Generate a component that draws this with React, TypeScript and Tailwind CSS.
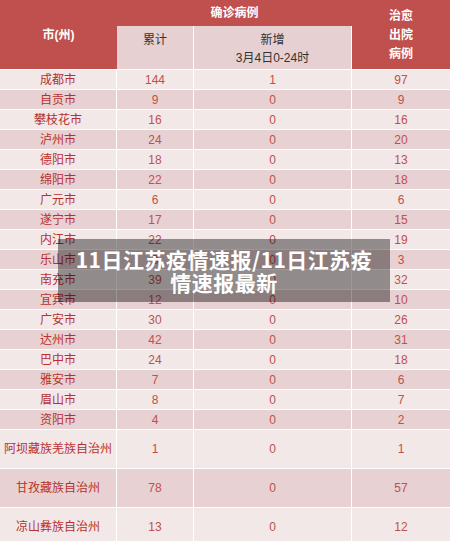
const rows: [string, string, string, string][] = [
  ["成都市", "144", "1", "97"],
  ["自贡市", "9", "0", "9"],
  ["攀枝花市", "16", "0", "16"],
  ["泸州市", "24", "0", "20"],
  ["德阳市", "18", "0", "13"],
  ["绵阳市", "22", "0", "18"],
  ["广元市", "6", "0", "6"],
  ["遂宁市", "17", "0", "15"],
  ["内江市", "22", "0", "19"],
  ["乐山市", "3", "0", "3"],
  ["南充市", "39", "0", "32"],
  ["宜宾市", "12", "0", "10"],
  ["广安市", "30", "0", "26"],
  ["达州市", "42", "0", "31"],
  ["巴中市", "24", "0", "18"],
  ["雅安市", "7", "0", "6"],
  ["眉山市", "8", "0", "7"],
  ["资阳市", "4", "0", "2"],
  ["阿坝藏族羌族自治州", "1", "0", "1"],
  ["甘孜藏族自治州", "78", "0", "57"],
  ["凉山彝族自治州", "13", "0", "12"],
];

function Row({ cells, index }: { cells: [string, string, string, string]; index: number }) {
  const tall = index >= 18;
  const bg = index % 2 === 0 ? "bg-[#f2e8e8]" : "bg-[#e8d1d2]";
  return (
    <div className={`flex border-t border-white ${bg} ${tall ? "h-[39px]" : "h-[20px]"}`}>
      <div className="w-[117px] border-r border-white flex items-center justify-center text-[#b7312e]">
        {cells[0]}
      </div>
      <div className="w-[77px] border-r border-white flex items-center justify-center text-[#c0504d]">
        {cells[1]}
      </div>
      <div className="w-[158px] border-r border-white flex items-center justify-center text-[#c0504d]">
        {cells[2]}
      </div>
      <div className="flex-1 flex items-center justify-center text-[#c0504d]">{cells[3]}</div>
    </div>
  );
}

export default function App() {
  return (
    <div
      className="relative w-[450px] h-[541px] overflow-hidden bg-[#f2e8e8] text-[12px] leading-none"
      style={{ fontFamily: '"Liberation Sans", "Noto Sans CJK SC", sans-serif' }}
    >
      {/* header */}
      <div className="flex h-[69px] bg-[#c0504d] text-white">
        <div className="w-[117px] flex items-center justify-center font-bold">市(州)</div>
        <div className="w-[235px] flex flex-col">
          <div className="h-[26px] flex items-center justify-center font-bold">确诊病例</div>
          <div className="flex-1 flex bg-[#e7d0d1] text-[#333]">
            <div className="w-[77px] border-r border-white flex justify-center pt-[8px]">累计</div>
            <div className="flex-1 border-r border-white flex flex-col items-center pt-[8px] gap-[6px]">
              <span>新增</span>
              <span>3月4日0-24时</span>
            </div>
          </div>
        </div>
        <div className="flex-1 flex flex-col items-center justify-center gap-[7px] font-bold">
          <span>治愈</span>
          <span>出院</span>
          <span>病例</span>
        </div>
      </div>

      {rows.map((r, i) => (
        <Row key={r[0]} cells={r} index={i} />
      ))}

      <div className="absolute left-[58px] top-[239px] w-[332px] h-[63px] bg-black/40 flex items-center justify-center px-[14px]">
        <p
          className="text-white font-bold text-[21px] leading-[23px] tracking-[0.5px] text-center"
          style={{ fontFamily: '"Noto Sans CJK SC", sans-serif' }}
        >
          11日江苏疫情速报/11日江苏疫情速报最新
        </p>
      </div>
    </div>
  );
}
